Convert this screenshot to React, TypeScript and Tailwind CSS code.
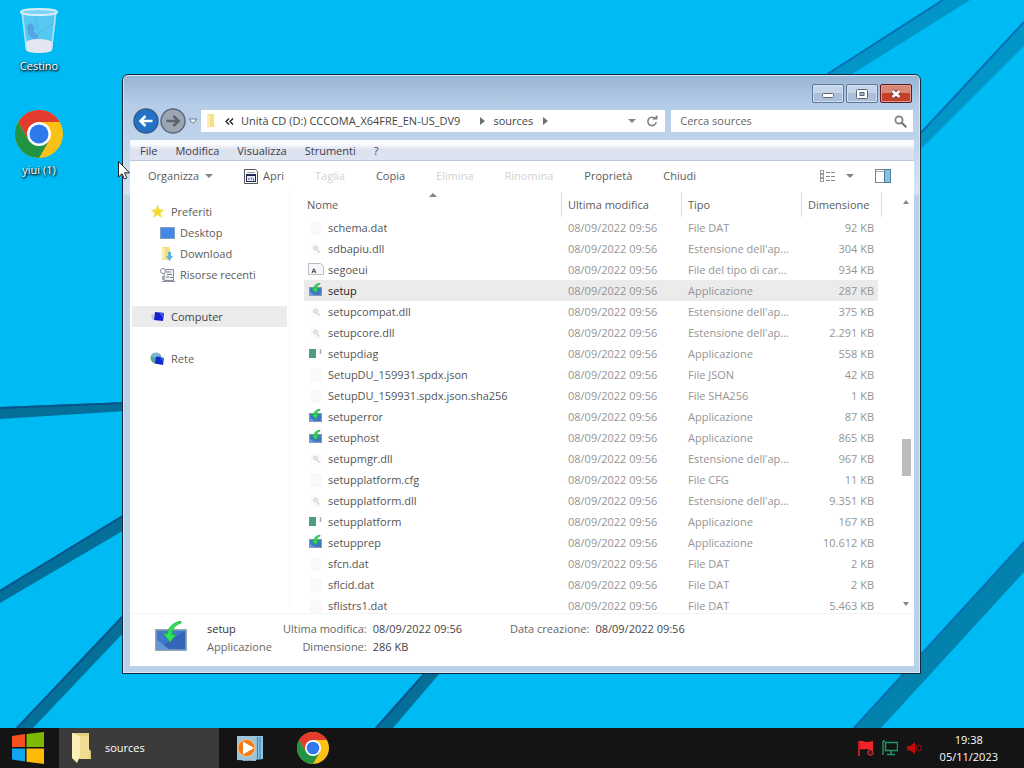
import React from 'react';

type IconKind = 'blank' | 'dll' | 'font' | 'setup' | 'console';

interface FileRow {
  name: string;
  type: string;
  size: string;
  icon: IconKind;
}

const APP = 'Applicazione';
const DLL = "Estensione dell'ap...";
const MODIFIED = '08/09/2022 09:56';

const files: FileRow[] = [
  { name: 'schema.dat', type: 'File DAT', size: '92 KB', icon: 'blank' },
  { name: 'sdbapiu.dll', type: DLL, size: '304 KB', icon: 'dll' },
  { name: 'segoeui', type: 'File del tipo di car...', size: '934 KB', icon: 'font' },
  { name: 'setup', type: APP, size: '287 KB', icon: 'setup' },
  { name: 'setupcompat.dll', type: DLL, size: '375 KB', icon: 'dll' },
  { name: 'setupcore.dll', type: DLL, size: '2.291 KB', icon: 'dll' },
  { name: 'setupdiag', type: APP, size: '558 KB', icon: 'console' },
  { name: 'SetupDU_159931.spdx.json', type: 'File JSON', size: '42 KB', icon: 'blank' },
  { name: 'SetupDU_159931.spdx.json.sha256', type: 'File SHA256', size: '1 KB', icon: 'blank' },
  { name: 'setuperror', type: APP, size: '87 KB', icon: 'setup' },
  { name: 'setuphost', type: APP, size: '865 KB', icon: 'setup' },
  { name: 'setupmgr.dll', type: DLL, size: '967 KB', icon: 'dll' },
  { name: 'setupplatform.cfg', type: 'File CFG', size: '11 KB', icon: 'blank' },
  { name: 'setupplatform.dll', type: DLL, size: '9.351 KB', icon: 'dll' },
  { name: 'setupplatform', type: APP, size: '167 KB', icon: 'console' },
  { name: 'setupprep', type: APP, size: '10.612 KB', icon: 'setup' },
  { name: 'sfcn.dat', type: 'File DAT', size: '2 KB', icon: 'blank' },
  { name: 'sflcid.dat', type: 'File DAT', size: '2 KB', icon: 'blank' },
  { name: 'sflistrs1.dat', type: 'File DAT', size: '5.463 KB', icon: 'blank' },
];

const ChromeIcon: React.FC<{ className: string }> = ({ className }) => (
  <svg viewBox="0 0 48 48" className={className} aria-hidden="true">
    <circle cx="24" cy="24" r="24" fill="#fbc116" />
    <path d="M24 12H44.8A24 24 0 0 0 3.2 12L13.6 30Z" fill="#e33b2e" />
    <path d="M13.6 30L3.2 12A24 24 0 0 0 24 48L34.4 30L24 36Z" fill="#229342" />
    <circle cx="24" cy="24" r="12" fill="#fff" />
    <circle cx="24" cy="24" r="9.5" fill="#3079ec" />
  </svg>
);

const SetupIcon: React.FC<{ className: string }> = ({ className }) => (
  <svg viewBox="0 0 32 30" className={className} aria-hidden="true">
    <rect x="0.8" y="8.8" width="30.4" height="20.4" fill="#3f78c8" stroke="#93a5b8" strokeWidth="1.6" />
    <path d="M2 28L30 10V28Z" fill="#3465b8" />
    <path d="M2 19L14 28H2Z" fill="#6496dc" />
    <path d="M26 0C17 2 13 7 12.500 13L8 12L15 21L21 13.500H17C17 8 20 4 26 2Z" fill="#2fe356" stroke="#17b33c" strokeWidth="0.8" />
  </svg>
);

// Small variant with a larger arrow, readable at list size
const SetupIconSmall: React.FC = () => (
  <svg viewBox="0 0 16 16" className="h-4 w-4 shrink-0" aria-hidden="true">
    <rect x="1.5" y="4.5" width="12" height="8" fill="#3f78c8" stroke="#8799ab" />
    <path d="M2 9l5 3.500H2z" fill="#6ea0e0" />
    <path d="M12 0C8.500 0.500 6 2.500 6 5.500L3.500 5.200L7.500 10L11 5.600L8.600 5.500C8.600 3.500 10 1.800 12 1Z" fill="#2fdc58" stroke="#189a3c" strokeWidth="0.6" />
  </svg>
);

const FileIcon: React.FC<{ kind: IconKind }> = ({ kind }) => {
  if (kind === 'setup') return <SetupIconSmall />;
  return (
    <svg viewBox="0 0 16 16" className="h-4 w-4 shrink-0" aria-hidden="true">
      {kind === 'blank' && <path d="M3 2h8l2 2v10H3z" fill="#fafafa" stroke="#f6f6f6" />}
      {kind === 'dll' && (
        <>
          <path d="M3 2h8l2 2v10H3z" fill="#fbfbfb" />
          <circle cx="7.500" cy="7" r="2" fill="#dde9f2" stroke="#cdd5da" />
          <path d="M9 9l2.500 2.500" stroke="#d0d4d8" strokeWidth="1.500" />
        </>
      )}
      {kind === 'font' && (
        <>
          <path d="M0.500 1.500h12l3 3v8h-15z" fill="#f7f7fa" stroke="#bcbcc8" />
          <path d="M4 11l1.500-4h.8l1.500 4M4.800 9.700h2.200" fill="none" stroke="#444" />
        </>
      )}
      {kind === 'console' && (
        <>
          <rect x="1" y="3" width="7" height="9" fill="#4f9c85" />
          <path d="M12.500 3v5" stroke="#a6b5ae" strokeWidth="1.500" />
        </>
      )}
    </svg>
  );
};

const Wallpaper: React.FC = () => (
  <svg viewBox="0 0 1024 728" preserveAspectRatio="none" className="absolute inset-0 h-full w-full" aria-hidden="true">
    <g fill="#0295c8">
      <path d="M942 0H970L849 76H824Z" />
      <path d="M1024 21V46L915 155V139Z" />
    </g>
    <g fill="#0482ae">
      <path d="M1024 541V572L881 728H853Z" />
    </g>
    <g fill="#04709a">
      <path d="M0 407L126 402V411L0 419Z" />
      <path d="M0 590L126 513V529L0 603Z" />
      <path d="M126 612V630L33 728H16Z" />
      <path d="M425 673H440L393 728H375Z" />
    </g>
    <g fill="none" stroke="#0470b4" strokeWidth="2">
      <path d="M943 0L826 75" />
      <path d="M1024 22L918 136" />
      <path d="M1024 542L854 728" />
    </g>
    <g fill="none" stroke="#06548a" strokeWidth="2">
      <path d="M425 673L376 728" />
      <path d="M0 408L126 403" />
      <path d="M0 591L126 514" />
      <path d="M126 613L17 728" />
    </g>
  </svg>
);

const DESKTOP_LABEL = 'leading-4 [text-shadow:1px_1px_2px_#000,0_1px_3px_#000]';

const DesktopIcons: React.FC = () => (
  <div className="relative flex w-[78px] flex-col items-center gap-9 pt-2 text-white">
    <button className="flex flex-col items-center gap-1">
      <svg viewBox="0 0 40 46" className="h-[46px] w-10" aria-hidden="true">
        <path d="M2 4L7 42C8 46 32 46 33 42L38 4Z" fill="#6ccdf2" fillOpacity="0.8" />
        <path d="M6 34L7 42C8 46 32 46 33 42L34 34C26 30 13 30 6 34Z" fill="#e4e6f2" />
        <path d="M8 18l4-3 4 5-2 3 6 5-3 3-5-1-3-5z" fill="#55a4e4" />
        <path d="M19 25l17-10M16 8l3 14" stroke="#5cb4dc" fill="none" />
        <path d="M3.500 6l4 36M36.500 6l-4 36" stroke="#b4e4f6" strokeWidth="1.500" />
        <ellipse cx="20" cy="4" rx="18" ry="3" fill="#7ed2f3" stroke="#d8eef8" strokeWidth="2" />
      </svg>
      <span className={DESKTOP_LABEL}>Cestino</span>
    </button>
    <button className="flex flex-col items-center gap-1">
      <ChromeIcon className="h-12 w-12" />
      <span className={DESKTOP_LABEL}>yiui (1)</span>
    </button>
  </div>
);

const CaretDown: React.FC = () => (
  <svg viewBox="0 0 8 4" className="h-1 w-2 fill-[#848484]" aria-hidden="true">
    <path d="M0 0h8L4 4z" />
  </svg>
);

const CaretRight: React.FC = () => (
  <svg viewBox="0 0 5 8" className="h-2 w-[5px] fill-[#707070]" aria-hidden="true">
    <path d="M0 0v8l5-4z" />
  </svg>
);

const CAPTION =
  'flex h-[19px] w-8 items-center justify-center rounded-xs border border-[#5f7698] bg-linear-to-b from-[#c5d5e9] from-50% to-[#a9bfdb] to-50% shadow-[inset_0_0_0_1px_#d3e0ef]';

const TitleBar: React.FC = () => (
  <div className="flex h-[34px] justify-end gap-0.5 pt-[9px] pr-0.5">
    <button aria-label="Riduci a icona" className={CAPTION}>
      <svg viewBox="0 0 12 5" className="mt-1 h-[5px] w-3">
        <rect x="0.5" y="0.5" width="11" height="4" rx="1" fill="#fff" stroke="#5c6574" />
      </svg>
    </button>
    <button aria-label="Ingrandisci" className={CAPTION}>
      <svg viewBox="0 0 12 10" className="h-2.5 w-3">
        <rect x="0.5" y="0.5" width="11" height="9" rx="1" fill="#fff" stroke="#5c6574" />
        <rect x="4" y="3.5" width="4" height="3" fill="#a5bbd5" stroke="#5c6574" />
      </svg>
    </button>
    <button
      aria-label="Chiudi finestra"
      className="flex h-[19px] w-8 items-center justify-center rounded-xs border border-[#5a1a2a] bg-linear-to-b from-[#d88674] from-50% to-[#c44028] to-50% shadow-[inset_0_0_0_1px_#e09c8e]"
    >
      <svg viewBox="0 0 12 10" className="h-2.5 w-3">
        <path d="M2.5 2l7 6M9.5 2l-7 6" stroke="#704048" strokeWidth="4.4" />
        <path d="M2.5 2l7 6M9.5 2l-7 6" stroke="#fff" strokeWidth="2.6" />
      </svg>
    </button>
  </div>
);

const AddressRow: React.FC = () => (
  <div className="flex h-6 items-center pr-px pl-[3px]">
    <button aria-label="Indietro">
      <svg viewBox="0 0 26 26" className="h-[26px] w-[26px]">
        <circle cx="13" cy="13" r="12" fill="#2272c8" stroke="#39598a" strokeWidth="1.5" />
        <path d="M19.5 13H8M12.5 8L7.5 13l5 5" fill="none" stroke="#fff" strokeWidth="2.6" />
      </svg>
    </button>
    <button aria-label="Avanti" className="ml-px">
      <svg viewBox="0 0 26 26" className="h-[26px] w-[26px]">
        <circle cx="13" cy="13" r="12" fill="#9ca6b3" stroke="#5b6880" strokeWidth="1.5" />
        <path d="M6.5 13H18M13.5 8l5 5-5 5" fill="none" stroke="#5d646e" strokeWidth="2.6" />
      </svg>
    </button>
    <button aria-label="Pagine recenti" className="mx-0.5">
      <svg viewBox="0 0 10 7" className="h-[7px] w-2.5">
        <path d="M1 1h8L5 5.5z" fill="#fff" stroke="#66768a" />
      </svg>
    </button>
    <div className="ml-px flex h-[22px] min-w-0 flex-1 items-center bg-white pl-[5px] text-[#444]">
      <svg viewBox="0 0 10 14" className="h-3.5 w-2.5" aria-hidden="true">
        <path d="M1 0h7v12l2 1H1z" fill="#f7e08a" />
        <path d="M1 0l3 2v12l-3-1z" fill="#fbeeb4" />
      </svg>
      <svg viewBox="0 0 9 7" className="ml-[9px] h-[7px] w-[9px]" aria-hidden="true">
        <path d="M4 0.5L1 3.5l3 3M8 0.5L5 3.5l3 3" fill="none" stroke="#222" strokeWidth="1.4" />
      </svg>
      <button className="ml-[7px] truncate">Unità CD (D:) CCCOMA_X64FRE_EN-US_DV9</button>
      <span className="mr-2 ml-5">
        <CaretRight />
      </span>
      <button>sources</button>
      <span className="ml-2.5 flex-1">
        <CaretRight />
      </span>
      <button aria-label="Percorsi precedenti">
        <CaretDown />
      </button>
      <button aria-label="Aggiorna" className="mr-[7px] ml-2.5">
        <svg viewBox="0 0 12 12" className="h-3 w-3">
          <path d="M9.5 4A4.200 4.200 0 1 0 10.200 7" fill="none" stroke="#808080" strokeWidth="1.6" />
          <path d="M6 4.500h5.500V0z" fill="#808080" />
        </svg>
      </button>
    </div>
    <label className="ml-1.5 flex h-[22px] w-[31%] items-center bg-white pr-1.5 pl-[9px]">
      <input
        type="text"
        aria-label="Cerca sources"
        placeholder="Cerca sources"
        className="min-w-0 flex-1 outline-none placeholder:text-[#666]"
      />
      <svg viewBox="0 0 13 13" className="h-[13px] w-[13px]" aria-hidden="true">
        <circle cx="5" cy="5" r="3.6" fill="none" stroke="#808080" strokeWidth="1.7" />
        <path d="M7.8 7.8l4.500 4.500" stroke="#707070" strokeWidth="2" />
      </svg>
    </label>
  </div>
);

const MenuBar: React.FC = () => (
  <nav className="mt-[7px] flex h-[21px] items-center gap-[18px] border-b border-[#b9c6dc] bg-linear-to-b from-[#fbfcfe] from-20% via-[#dde1ee] via-50% to-[#dee4f2] px-2.5 pt-0.5 text-[#3d3d4a]">
    <button>File</button>
    <button>Modifica</button>
    <button>Visualizza</button>
    <button>Strumenti</button>
    <button>?</button>
  </nav>
);

const Toolbar: React.FC = () => (
  <div className="flex h-[30px] items-center gap-[31px] pr-[23px] pl-[18px] text-[#5c5c5c]">
    <button className="flex items-center gap-1.5">
      Organizza <CaretDown />
    </button>
    <button className="flex items-center gap-[5px]">
      <svg viewBox="0 0 14 15" className="h-[15px] w-3.5" aria-hidden="true">
        <path d="M0.5 0.500h11l2 2v12h-13z" fill="#fff" stroke="#555" />
        <path d="M3 3.500h8" stroke="#999" />
        <rect x="2.500" y="5.500" width="9" height="7" fill="#e4ebfa" stroke="#222a55" />
        <path d="M2.500 6h9" stroke="#222a55" strokeWidth="2" />
        <path d="M5 9v2M7.500 8.500v2M9.500 9.500v2" stroke="#8a3060" />
      </svg>
      Apri
    </button>
    <button disabled className="text-[#d2d2d2]">Taglia</button>
    <button>Copia</button>
    <button disabled className="text-[#d2d2d2]">Elimina</button>
    <button disabled className="text-[#d2d2d2]">Rinomina</button>
    <button>Proprietà</button>
    <button>Chiudi</button>
    <div className="ml-auto flex items-center">
      <button aria-label="Cambia visualizzazione" className="flex items-center gap-2.5">
        <svg viewBox="0 0 16 13" className="h-[13px] w-4" aria-hidden="true">
          <g fill="#fff" stroke="#999">
            <rect x="0.5" y="0.5" width="3" height="3" />
            <rect x="0.5" y="4.5" width="3" height="3" />
            <rect x="0.5" y="8.5" width="3" height="3" />
          </g>
          <path d="M6 2.500h4M11 2.500h4M6 6.500h4M11 6.500h4M6 10.500h4M11 10.500h4" stroke="#888" />
        </svg>
        <CaretDown />
      </button>
      <button aria-label="Riquadro di anteprima" className="ml-[21px]">
        <svg viewBox="0 0 16 14" className="h-3.5 w-4">
          <rect x="0.5" y="0.5" width="15" height="13" fill="#fff" stroke="#6c8494" />
          <path d="M1 2.500h9" stroke="#9ab0bd" />
          <rect x="9.5" y="0.5" width="6" height="13" fill="#86c0dc" stroke="#4f7f9c" />
        </svg>
      </button>
    </div>
  </div>
);

const ITEM = 'flex h-[21px] w-full items-center';

const Sidebar: React.FC = () => (
  <aside className="w-40 shrink-0 border-r border-[#fafafa] pt-2.5 pr-0.5 pl-0.5 text-[#5c5c5c]">
    <button className={`${ITEM} gap-1.5 pl-[18px]`}>
      <svg viewBox="0 0 15 15" className="h-[15px] w-[15px]" aria-hidden="true">
        <path
          d="M7.5 1l1.800 4.400 4.700.4-3.600 3.100 1.200 4.600-4.100-2.500-4.100 2.500 1.200-4.600L1 5.800l4.700-.4z"
          fill="#f6d92e"
          stroke="#f3e58e"
          strokeWidth="0.6"
        />
      </svg>
      Preferiti
    </button>
    <button className={`${ITEM} gap-[5px] pl-7`}>
      <svg viewBox="0 0 15 12" className="h-3 w-[15px]" aria-hidden="true">
        <rect x="0.5" y="0.5" width="14" height="11" fill="#4688e8" stroke="#7f9fc9" />
      </svg>
      Desktop
    </button>
    <button className={`${ITEM} gap-[5px] pl-7`}>
      <svg viewBox="0 0 15 14" className="h-3.5 w-[15px]" aria-hidden="true">
        <path d="M2 0h7l2 6-1 7H2z" fill="#f3dc7c" />
        <path d="M2 0l3 2v11l-3-1z" fill="#faedb0" />
        <path d="M8 5h3v4h2l-3.500 5L6 9h2z" fill="#5fb4e0" />
      </svg>
      Download
    </button>
    <button className={`${ITEM} gap-[5px] pl-7`}>
      <svg viewBox="0 0 15 14" className="h-3.5 w-[15px]" aria-hidden="true">
        <path d="M4 1.500h9.500v11H4zM2 13.500h13" fill="#eef0f4" stroke="#8b909c" />
        <path d="M6 4h5M7 6.500h5M6 9h3M10 9.500h3" stroke="#7d828e" />
        <circle cx="3" cy="3" r="2.500" fill="#fff" stroke="#8b909c" />
        <path d="M3 8v4" stroke="#8b909c" strokeWidth="1.5" />
      </svg>
      Risorse recenti
    </button>
    <button className={`${ITEM} mt-[21px] gap-1.5 bg-[#ebebeb] pl-[18px] text-[#444]`}>
      <svg viewBox="0 0 15 12" className="h-3 w-[15px]" aria-hidden="true">
        <path d="M1 4l3-1v5l-2 1z" fill="#c3c9dc" />
        <path d="M5 1l9 1-1 8-9-1z" fill="#1420d0" />
        <path d="M9 1.500l5 .5-1 5z" fill="#3a55f0" />
      </svg>
      Computer
    </button>
    <button className={`${ITEM} mt-[21px] gap-1.5 pl-[18px]`}>
      <svg viewBox="0 0 15 14" className="h-3.5 w-[15px]" aria-hidden="true">
        <circle cx="6" cy="6" r="5.500" fill="#4fa596" />
        <path d="M1 4c3-4 7-4 9-1L6 6z" fill="#7db6d8" />
        <path d="M6 4.500l8 1.500-1 7-8-1.500z" fill="#1226d2" />
        <path d="M10 5.200l4 .8-1 4z" fill="#3b64ee" />
      </svg>
      Rete
    </button>
  </aside>
);

const TH = 'h-[25px] border-r border-[#dedede] pl-1.5 text-left font-normal';

const FileList: React.FC = () => (
  <div className="min-w-0 flex-1 overflow-hidden pt-px pl-3.5">
    <table className="w-full table-fixed border-separate border-spacing-0">
      <thead className="text-[#5c5c5c]">
        <tr>
          <th className="relative h-[25px] border-r border-[#dedede] pl-[3px] text-left font-normal">
            Nome
            <svg viewBox="0 0 8 4" className="absolute top-px left-1/2 h-1 w-2 -translate-x-1/2" aria-hidden="true">
              <path d="M0 4h8L4 0z" fill="#848484" />
            </svg>
          </th>
          <th className={`${TH} w-[120px]`}>Ultima modifica</th>
          <th className={`${TH} w-[120px]`}>Tipo</th>
          <th className={`${TH} w-20`}>Dimensione</th>
        </tr>
      </thead>
      <tbody className="text-[#959595]">
        {files.map((file) => {
          const selected = file.name === 'setup';
          const bg = selected ? 'bg-[#ebebeb]' : '';
          return (
            <tr key={file.name} aria-selected={selected}>
              <td className={`h-[21px] pl-1 ${bg} ${selected ? 'text-[#222]' : 'text-[#555]'}`}>
                <div className="flex items-center gap-1">
                  <FileIcon kind={file.icon} />
                  <span className="truncate">{file.name}</span>
                </div>
              </td>
              <td className={`pl-1.5 ${bg}`}>{MODIFIED}</td>
              <td className={`truncate pl-1.5 ${bg}`}>{file.type}</td>
              <td className={`border-r-4 border-transparent bg-clip-padding pr-1 text-right ${bg}`}>{file.size}</td>
            </tr>
          );
        })}
      </tbody>
    </table>
  </div>
);

const ScrollBar: React.FC = () => (
  <div className="ml-4 flex w-4 shrink-0 flex-col items-center pt-[9px] pb-[7px]">
    <svg viewBox="0 0 6 4" className="h-1 w-1.5" aria-hidden="true">
      <path d="M0 4h6L3 0z" fill="#848484" />
    </svg>
    <div className="grow-[234]" />
    <div className="h-[37px] w-[9px] bg-[#bcbcbc]" />
    <div className="grow-[126]" />
    <svg viewBox="0 0 6 4" className="h-1 w-1.5" aria-hidden="true">
      <path d="M0 0h6L3 4z" fill="#848484" />
    </svg>
  </div>
);

const DetailsPane: React.FC = () => (
  <div className="flex h-[53px] shrink-0 items-start border-t border-[#f4f4f4] pt-1.5 pl-[25px] leading-[18px] text-[#666]">
    <SetupIcon className="mt-px h-[30px] w-8" />
    <div className="ml-5 w-[68px]">
      <div className="text-[#333]">setup</div>
      <div>{APP}</div>
    </div>
    <dl className="ml-2 grid grid-cols-[auto_auto] gap-x-1.5">
      <dt className="text-right">Ultima modifica:</dt>
      <dd className="text-[#444]">{MODIFIED}</dd>
      <dt className="text-right">Dimensione:</dt>
      <dd className="text-[#444]">286 KB</dd>
    </dl>
    <dl className="ml-12 flex gap-1.5">
      <dt>Data creazione:</dt>
      <dd className="text-[#444]">{MODIFIED}</dd>
    </dl>
  </div>
);

const ExplorerWindow: React.FC = () => (
  <section className="absolute top-[74px] right-[103px] bottom-[54px] left-[122px] flex flex-col rounded-t-md border border-[#14283c] bg-[#b9d1e9] bg-[linear-gradient(#98b4d3,#b5cde8_30px,#bdd3ea_60px,#d6e3f2_118px,#b9d1e9_122px)] pr-1.5 pb-[7px] pl-[7px] shadow-[inset_0_0_0_1px_#d6e6f5]">
    <TitleBar />
    <AddressRow />
    <MenuBar />
    <div className="flex min-h-0 flex-1 flex-col bg-white">
      <Toolbar />
      <div className="flex min-h-0 flex-1">
        <Sidebar />
        <FileList />
        <ScrollBar />
      </div>
      <DetailsPane />
    </div>
  </section>
);

const Taskbar: React.FC = () => (
  <footer className="relative flex h-10 shrink-0 items-center bg-[#141414] text-white">
    <button aria-label="Start" className="flex w-[59px] justify-center pr-1">
      <svg viewBox="0 0 32 32" className="h-8 w-8">
        <path d="M0 4l13-2v13H0z" fill="#f4511e" />
        <path d="M14.500 2L32 0v15H14.500z" fill="#7cb900" />
        <path d="M0 16.500h13v13L0 27.500z" fill="#0fa5f0" />
        <path d="M14.500 16.500H32V32l-17.500-2.300z" fill="#ffba08" />
      </svg>
    </button>
    <button className="flex h-full w-40 items-center gap-3.5 bg-[#3b3b3b] pl-3">
      <svg viewBox="0 0 20 30" className="h-[30px] w-5" aria-hidden="true">
        <path d="M1 0h17v16l2 2v8H5z" fill="#e8cd7d" />
        <path d="M1 0l8 3v20l-3 7-5-5z" fill="#fbeeb6" />
        <path d="M9 3h9v23H9z" fill="#f1dc93" />
      </svg>
      sources
    </button>
    <button aria-label="Windows Media Player" className="ml-[18px]">
      <svg viewBox="0 0 27 27" className="h-[27px] w-[27px]">
        <path d="M4 1h22v23l-20 2z" fill="#8cc2de" />
        <path d="M20.500 2v23M23 2v22.500" stroke="#3d7fa6" />
        <path d="M0 1h19v25L0 25z" fill="#9cc3d8" />
        <circle cx="9.500" cy="13" r="8.500" fill="#ee7a1c" stroke="#f6c28c" />
        <path d="M6 6.500v13L17 13z" fill="#fff" />
      </svg>
    </button>
    <button aria-label="Google Chrome" className="ml-[33px]">
      <ChromeIcon className="h-8 w-8" />
    </button>
    <div className="ml-auto flex items-center gap-2 pr-[26px]">
      <svg viewBox="0 0 16 16" className="h-4 w-4" aria-hidden="true">
        <path d="M1 1v15" stroke="#e8262e" strokeWidth="1.5" />
        <path d="M2 1c3-1 4 1 7 1s4-1 6-1v9c-3 1-4-1-6-1s-4 1-7 0z" fill="#f0222c" />
        <circle cx="12.500" cy="12.500" r="2.800" fill="#5a1218" stroke="#e0404c" />
      </svg>
      <svg viewBox="0 0 16 16" className="h-4 w-4" aria-hidden="true">
        <path d="M3.500 2.500h12v8h-12zM1 1v14M1 1h2M9 11v3M5 14.500h8" fill="none" stroke="#1d9a68" strokeWidth="1.4" />
      </svg>
      <svg viewBox="0 0 16 16" className="h-4 w-4" aria-hidden="true">
        <path d="M1 6h3l5-4v12L4 10.500H1z" fill="#c00808" />
        <circle cx="13" cy="8" r="2.600" fill="none" stroke="#8e0a0a" strokeWidth="1.4" />
      </svg>
      <button className="ml-2.5 text-center leading-[17px]">
        19:38
        <br />
        05/11/2023
      </button>
    </div>
  </footer>
);

const App: React.FC = () => (
  <div className="flex h-screen flex-col overflow-hidden bg-[#00bbf3] font-['Open_Sans','Noto_Sans',sans-serif] text-[11px] leading-4">
    <main className="relative min-h-0 flex-1">
      <Wallpaper />
      <DesktopIcons />
      <ExplorerWindow />
      <svg viewBox="0 0 12 19" className="absolute top-[161px] left-[118px] h-[19px] w-3" aria-hidden="true">
        <path d="M0.5 0.500v15.500l3.500-3.300 2.300 5.300 2.500-1-2.300-5.200h5z" fill="#fff" stroke="#222" />
      </svg>
    </main>
    <Taskbar />
  </div>
);

export default App;
